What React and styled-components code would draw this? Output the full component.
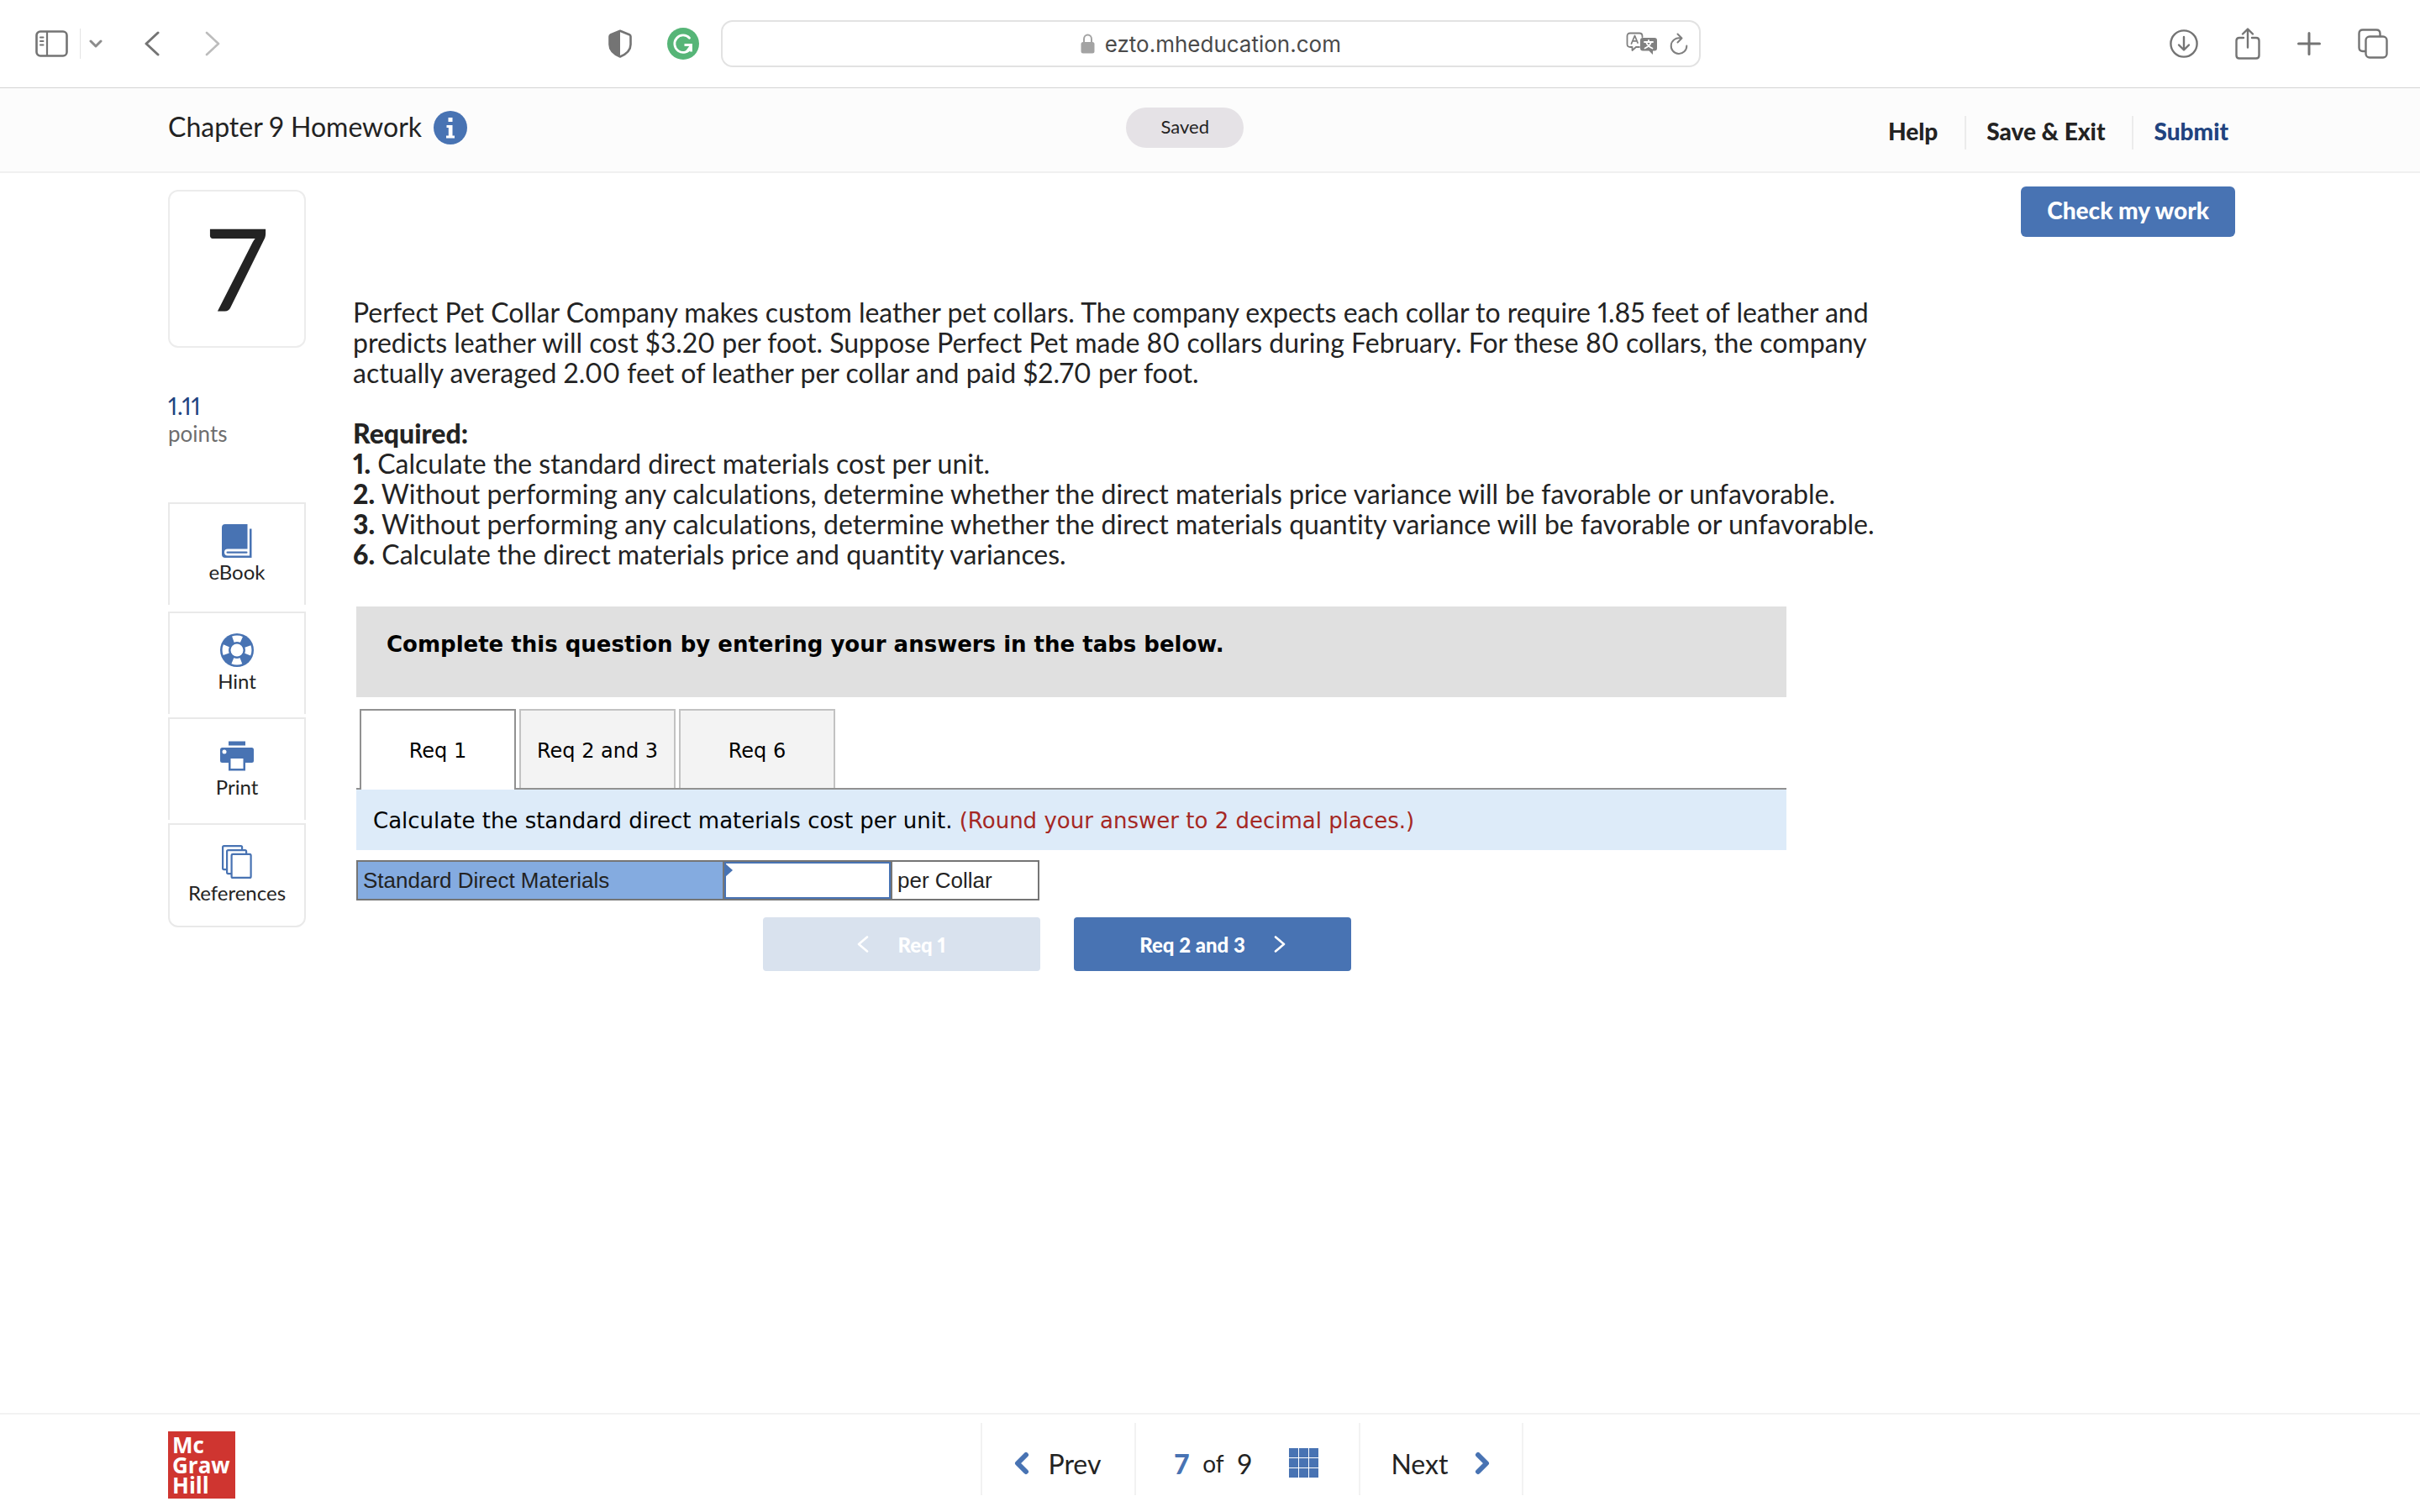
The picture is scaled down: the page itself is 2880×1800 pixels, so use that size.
import React, { useState } from "react";
import styled, { createGlobalStyle } from "styled-components";

const GlobalStyle = createGlobalStyle`
  * {
    box-sizing: border-box;
  }
  body {
    margin: 0;
    background: #fff;
    color: #232323;
    font-family: Lato, "Open Sans", sans-serif;
    font-variant-ligatures: none;
    font-variant-numeric: proportional-nums;
  }
  button, input {
    font: inherit;
    font-variant-numeric: inherit;
    color: inherit;
    margin: 0;
    padding: 0;
    border: none;
    background: none;
  }
  button {
    cursor: pointer;
  }
  a {
    color: inherit;
    text-decoration: none;
  }
  svg {
    display: block;
    flex: none;
  }
`;

const Page = styled.div`
  display: flex;
  flex-direction: column;
  min-height: 100vh;
`;

/* browser toolbar */

const Toolbar = styled.div`
  display: grid;
  grid-template-columns: 5fr auto 6fr;
  align-items: center;
  height: 105px;
  padding: 0 38px 0 42px;
  border-bottom: 1px solid #d4d4d4;
  color: #747474;
`;

const ToolGroup = styled.div`
  display: flex;
  align-items: center;
  gap: ${({ $gap }) => $gap}px;
  justify-content: ${({ $end }) => ($end ? "flex-end" : "flex-start")};
`;

const ToolDivider = styled.span`
  width: 1px;
  height: 36px;
  margin-right: -4px;
  background: #e4e4e4;
`;

const HistoryButtons = styled(ToolGroup)`
  margin-left: 36px;
`;

const AddressBar = styled.div`
  display: flex;
  align-items: center;
  width: 1166px;
  height: 56px;
  margin-left: 12px;
  padding: 0 13px;
  border: 2px solid #e2e2e2;
  border-radius: 14px;
`;

const AddressSide = styled.div`
  display: flex;
  flex: 1;
  justify-content: flex-end;
  gap: 14px;
`;

const Address = styled.label`
  display: flex;
  align-items: center;
  gap: 12px;
  color: #4a4a4a;
`;

const AddressInput = styled.input`
  field-sizing: content;
  padding-top: 2px;
  font-family: Inter, sans-serif;
  font-size: 26px;
  line-height: 32px;
  outline: none;
`;

/* assignment header */

const Header = styled.header`
  display: grid;
  grid-template-columns: 29fr auto 30fr;
  height: 101px;
  padding: 0 220px 0 200px;
  background: #fcfcfc;
  border-bottom: 2px solid #f0f0f0;
`;

const Title = styled.h1`
  display: flex;
  align-items: center;
  gap: 14px;
  height: 94px;
  margin: 0;
  font-size: 32px;
  font-weight: 400;
`;

const TitleText = styled.span`
  padding-bottom: 4px;
`;

const SavedPill = styled.span`
  align-self: start;
  width: 140px;
  margin-top: 23px;
  padding-bottom: 2px;
  border-radius: 24px;
  background: #e5e2e6;
  font-size: 22px;
  line-height: 46px;
  text-align: center;
`;

const HeaderLinks = styled.nav`
  display: flex;
  align-items: center;
  justify-content: flex-end;
  height: 106px;
  padding-right: 8px;
`;

const HeaderLink = styled.a`
  padding: 0 0 4px 24px;
  margin-left: 32px;
  border-left: 2px solid ${({ $first }) => ($first ? "transparent" : "#ececec")};
  color: ${({ $primary }) => ($primary ? "#21437f" : "inherit")};
  font-size: 28px;
  font-weight: 900;
  line-height: 36px;
`;

/* main area */

const Main = styled.main`
  display: flex;
  flex: 1;
  gap: 56px;
  padding: 0 220px 0 200px;
`;

const Sidebar = styled.aside`
  flex: none;
  width: 164px;
  padding-top: 20px;
`;

const QuestionNumber = styled.div`
  height: 188px;
  border: 2px solid #ececec;
  border-radius: 12px;
  font-size: 136px;
  line-height: 180px;
  text-align: center;
`;

const Points = styled.div`
  margin: 52px 0 66px;
  color: #6e6e6e;
  font-size: 26px;
  line-height: 32px;
`;

const PointsValue = styled.div`
  color: #21437f;
  font-size: 28px;
  line-height: 34px;
`;

const ToolButton = styled.button`
  display: flex;
  flex-direction: column;
  align-items: center;
  gap: 4px;
  width: 100%;
  margin-bottom: ${({ $first }) => ($first ? 8 : 4)}px;
  padding: 24px 0 26px;
  border: 2px solid #e9e9e9;
  border-bottom-width: 0;
  font-size: 24px;
  line-height: 26px;

  &:last-child {
    border-bottom-width: 2px;
    border-radius: 0 0 12px 12px;
  }
`;

const ToolIcon = styled.span`
  display: flex;
  align-items: center;
  height: 40px;
`;

const Content = styled.section`
  flex: 1;
  padding-top: 16px;
`;

const CheckRow = styled.div`
  display: flex;
  justify-content: flex-end;
  margin-bottom: 72px;
`;

const CheckButton = styled.button`
  padding: 0 31px 4px;
  border-radius: 6px;
  background: #4873b3;
  color: #fff;
  font-size: 28px;
  font-weight: 900;
  line-height: 56px;
`;

const Question = styled.div`
  max-width: 1840px;
  margin-bottom: 44px;
  font-size: 32px;
  line-height: 36px;

  p {
    margin: 0 0 36px;
  }
  p:last-child {
    margin: 0;
  }
  b {
    font-weight: 900;
  }
`;

const AnswerArea = styled.div`
  max-width: 1706px;
  padding-left: 4px;
  color: #000;
  font-family: Verdana, "DejaVu Sans", sans-serif;
`;

const Banner = styled.div`
  margin-bottom: 14px;
  padding: 27px 36px 45px;
  background: #e0e0e0;
  font-size: 26px;
  font-weight: 700;
  line-height: 36px;
`;

const TabList = styled.div`
  display: flex;
  gap: 4px;
  height: 96px;
  padding-left: 4px;
  border-bottom: 2px solid #919191;
`;

const Tab = styled.button`
  width: 186px;
  height: ${({ $active }) => ($active ? 96 : 94)}px;
  padding-top: ${({ $active }) => ($active ? 2 : 4)}px;
  border: 2px solid ${({ $active }) => ($active ? "#919191" : "#c2c2c2")};
  border-bottom: none;
  background: ${({ $active }) => ($active ? "#fff" : "#f3f3f3")};
  font-size: 24px;
`;

const Instruction = styled.div`
  padding: 19px 20px 17px;
  background: #ddebf9;
  font-size: 26px;
  line-height: 36px;
`;

const RoundingNote = styled.span`
  color: #a52824;
`;

const AnswerTable = styled.table`
  width: 811px;
  height: 48px;
  margin-top: 12px;
  border-collapse: collapse;
  table-layout: fixed;
  color: #232323;
  font-family: "Liberation Sans", Arial, sans-serif;
  font-size: 26px;
  line-height: 30px;
`;

const Cell = styled.td`
  position: relative;
  width: ${({ $width }) => $width}px;
  height: 46px;
  padding: ${({ $flush }) => ($flush ? "0" : "0 6px")};
  border: 2px solid #757575;
  background: ${({ $filled }) => ($filled ? "#84abe0" : "#fff")};
`;

const AnswerInput = styled.input`
  display: block;
  width: 100%;
  height: 44px;
  padding: 0 12px;
  border: 2px solid #4873b3;
  outline: none;
`;

const CellMarker = styled.svg`
  position: absolute;
  top: 2px;
  left: 1px;
`;

const StepRow = styled.div`
  display: flex;
  justify-content: center;
  gap: 40px;
  margin-top: 20px;
  padding-right: 34px;
  font-family: Lato, sans-serif;
`;

const StepButton = styled.button`
  display: flex;
  align-items: center;
  justify-content: center;
  gap: 34px;
  width: 330px;
  height: 64px;
  border-radius: 4px;
  background: ${({ disabled }) => (disabled ? "#d9e2ee" : "#4873b3")};
  color: #fff;
  font-size: 24px;
  font-weight: 900;
`;

/* footer */

const Footer = styled.footer`
  display: grid;
  grid-template-columns: 8fr auto 7fr;
  height: 118px;
  padding: 10px 220px 0 200px;
  border-top: 2px solid #f2f2f2;
`;

const Logo = styled.div`
  width: 80px;
  height: 80px;
  margin-top: 10px;
  padding: 4px 5px;
  background: #cf3530;
  color: #fff;
  font-family: "Open Sans", sans-serif;
  font-size: 26px;
  font-weight: 700;
  line-height: 24px;
`;

const Pager = styled.nav`
  display: flex;
  height: 86px;
  border-right: 2px solid #f2f2f2;
  font-size: 32px;
`;

const PagerItem = styled.div`
  display: flex;
  align-items: center;
  justify-content: center;
  gap: ${({ $gap }) => $gap}px;
  width: ${({ $width }) => $width}px;
  padding: 10px 2px 0 0;
  border-left: 2px solid #f2f2f2;
`;

const PagerButton = styled(PagerItem).attrs({ as: "button" })`
  border-top: none;
`;

const Current = styled.span`
  color: #4873b3;
  font-weight: 900;
`;

const Of = styled.span`
  font-size: 28px;
`;

const IconButton = styled.button`
  margin-left: ${({ $push }) => $push || 0}px;
`;

/* icons */

const Line = ({ w, h, d, width = 2, color = "currentColor", children }) => (
  <svg
    width={w}
    height={h}
    viewBox={`0 0 ${w} ${h}`}
    fill="none"
    stroke={color}
    strokeWidth={width}
    strokeLinecap="round"
    strokeLinejoin="round"
  >
    {d && <path d={d} />}
    {children}
  </svg>
);

const SidebarIcon = () => (
  <Line w={39} h={32} width={2.6}>
    <rect x="1.5" y="1.5" width="36" height="29" rx="4.5" />
    <path d="M14 2V30" strokeWidth="2.2" />
    <path d="M6 8.5H9.5M6 13H9.5M6 17.5H9.5" strokeWidth="2" />
  </Line>
);

const ShieldIcon = () => (
  <Line w={28} h={34} width={2.6}>
    <path d="M14 1.8L25 6.2Q26.5 7 26.5 8.5V18C26.5 25 20 30 14 32.5C8 30 1.5 25 1.5 18V8.5Q1.5 7 3 6.2Z" />
    <path d="M14 1.8V32.5C8 30 1.5 25 1.5 18V8.5Q1.5 7 3 6.2Z" fill="currentColor" stroke="none" />
  </Line>
);

const GrammarlyIcon = () => (
  <svg width="38" height="38" viewBox="0 0 38 38" fill="none">
    <circle cx="19" cy="19" r="19" fill="#56b577" />
    <path
      d="M26.5 12.2A10.2 10.2 0 1 0 28 24"
      stroke="#fff"
      strokeWidth="2.8"
      strokeLinecap="round"
    />
    <path d="M20.5 20.5H28.5V28.5" stroke="#fff" strokeWidth="2.8" />
    <path d="M28.5 20.5L23 28" stroke="#fff" strokeWidth="2" />
  </svg>
);

const LockIcon = () => (
  <svg width="17" height="24" viewBox="0 0 17 24" fill="none">
    <path d="M4 11V6.5A4.5 5 0 0 1 13 6.5V11" stroke="#a3a3a3" strokeWidth="2" />
    <rect x="0.5" y="10" width="16" height="13.5" rx="2.5" fill="#a3a3a3" />
  </svg>
);

const TranslateIcon = () => (
  <Line w={38} h={28} width={1.8} color="#808080">
    <path d="M16 18H12L7.5 22V18H5Q1.5 18 1.5 14.5V5Q1.5 1.5 5 1.5H16Q19.5 1.5 19.5 5V6" />
    <path d="M6.5 14L10.5 4.5L14 13M8 10.8H13" />
    <path
      d="M20 7H34Q37 7 37 10V19.5Q37 22.5 34 22.5H32V27L27.5 22.5H20Q17 22.5 17 19.5V10Q17 7 20 7Z"
      fill="#808080"
      stroke="none"
    />
    <path d="M22 12H32M27 9.8V12M30 12Q28.5 17 22.5 19.5M24 12Q26 17.5 31.5 19.5" stroke="#fff" />
  </Line>
);

const ReloadIcon = () => (
  <Line w={22} h={27} width={2} color="#808080" d="M12.5 6.5A9.3 9.3 0 1 0 20.3 15.5M9.5 1.5L14.5 6.5L9.5 11.5" />
);

const DownloadIcon = () => (
  <Line w={34} h={34} width={2.4}>
    <circle cx="17" cy="17" r="15.6" />
    <path d="M17 9V24M11 18.5L17 24.5L23 18.5" />
  </Line>
);

const ShareIcon = () => (
  <Line w={30} h={38} width={2.4} d="M10 12H5Q1.5 12 1.5 15.5V33Q1.5 36.5 5 36.5H25Q28.5 36.5 28.5 33V15.5Q28.5 12 25 12H20M15 23.5V2M9 7.5L15 1.5L21 7.5" />
);

const TabsIcon = () => (
  <Line w={36} h={36} width={2.4}>
    <path d="M9 27H6Q1.5 27 1.5 22.5V6Q1.5 1.5 6 1.5H22Q26.5 1.5 26.5 6V9" />
    <rect x="9.5" y="9.5" width="25" height="25" rx="4.5" />
  </Line>
);

const InfoIcon = () => (
  <svg width="40" height="40" viewBox="0 0 40 40">
    <circle cx="20" cy="20" r="20" fill="#4873b3" />
    <path d="M17.5 8H22.5V13H17.5ZM15.5 17H22.5V29.5H25V32.5H15V29.5H17.8V20H15.5Z" fill="#fff" />
  </svg>
);

const BookIcon = () => (
  <svg width="36" height="40" viewBox="0 0 36 40" fill="#4873b3">
    <path d="M4 0H30.5V29.5H7A4 4 0 0 0 7 37.5H33V5.5H35.5V40H4A4 4 0 0 1 0 36V4A4 4 0 0 1 4 0Z" />
    <rect x="5.5" y="32.5" width="25" height="2.2" rx="1" />
  </svg>
);

const HintIcon = () => (
  <svg width="40" height="40" viewBox="0 0 40 40">
    <circle cx="20" cy="20" r="20" fill="#4873b3" />
    <circle
      cx="20"
      cy="20"
      r="13.7"
      fill="none"
      stroke="#fff"
      strokeWidth="7.5"
      strokeDasharray="10.3 11.22"
      strokeDashoffset="5.15"
    />
    <circle cx="20" cy="20" r="7.5" fill="#fff" />
  </svg>
);

const PrintIcon = () => (
  <svg width="40" height="36" viewBox="0 0 40 36">
    <path d="M10 0.5H30V5.5H10Z" fill="#4873b3" />
    <rect y="8" width="40" height="18" rx="2.5" fill="#4873b3" />
    <circle cx="5" cy="13" r="2.5" fill="#fff" />
    <path d="M11.2 19.5H28.8V34.3H11.2Z" fill="#4873b3" stroke="#4873b3" strokeWidth="2.4" />
    <path d="M12.5 21H27.5V33H12.5Z" fill="#fff" />
  </svg>
);

const ReferencesIcon = () => (
  <svg width="36" height="40" viewBox="0 0 36 40" fill="#fff" stroke="#4873b3" strokeWidth="2.2">
    <rect x="1.1" y="1.1" width="23" height="28" rx="1.5" />
    <rect x="6.1" y="6.1" width="23" height="28" rx="1.5" />
    <rect x="11.6" y="10.9" width="23" height="28" rx="1.5" />
  </svg>
);

const GridIcon = () => (
  <svg width="36" height="36" viewBox="0 0 36 36" fill="#4873b3">
    {[0, 12, 24].map((y) => [0, 12, 24].map((x) => <rect key={`${x}-${y}`} x={x} y={y} width="11" height="11" />))}
  </svg>
);

const tools = [
  { label: "eBook", Icon: BookIcon },
  { label: "Hint", Icon: HintIcon },
  { label: "Print", Icon: PrintIcon },
  { label: "References", Icon: ReferencesIcon },
];

const tabs = ["Req 1", "Req 2 and 3", "Req 6"];

function BrowserToolbar() {
  const [address, setAddress] = useState("ezto.mheducation.com");
  return (
    <Toolbar>
      <ToolGroup $gap={14}>
        <button aria-label="Show sidebar"><SidebarIcon /></button>
        <ToolDivider />
        <button aria-label="Tab groups"><Line w={16} h={12} width={3} color="#8c8c8c" d="M2 3L8 9L14 3" /></button>
        <HistoryButtons $gap={54}>
          <button aria-label="Back"><Line w={18} h={30} width={3} d="M16 2L2 15L16 28" /></button>
          <button aria-label="Forward"><Line w={18} h={30} width={2.6} color="#bcbcbc" d="M2 2L16 15L2 28" /></button>
        </HistoryButtons>
      </ToolGroup>
      <ToolGroup $gap={42}>
        <button aria-label="Privacy report"><ShieldIcon /></button>
        <ToolGroup $gap={14}>
          <button aria-label="Grammarly"><GrammarlyIcon /></button>
          <AddressBar>
            <AddressSide />
            <Address>
              <LockIcon />
              <AddressInput
                type="text"
                aria-label="Address"
                value={address}
                onChange={(e) => setAddress(e.target.value)}
              />
            </Address>
            <AddressSide>
              <button aria-label="Translate"><TranslateIcon /></button>
              <button aria-label="Reload"><ReloadIcon /></button>
            </AddressSide>
          </AddressBar>
        </ToolGroup>
      </ToolGroup>
      <ToolGroup $gap={44} $end>
        <button aria-label="Downloads"><DownloadIcon /></button>
        <button aria-label="Share"><ShareIcon /></button>
        <button aria-label="New tab"><Line w={28} h={28} width={3} d="M14 1.5V26.5M1.5 14H26.5" /></button>
        <button aria-label="Show tabs"><TabsIcon /></button>
      </ToolGroup>
    </Toolbar>
  );
}

function AnswerPanel() {
  const [active, setActive] = useState(0);
  const [answer, setAnswer] = useState("");
  return (
    <AnswerArea>
      <Banner>Complete this question by entering your answers in the tabs below.</Banner>
      <TabList role="tablist">
        {tabs.map((tab, i) => (
          <Tab key={tab} role="tab" aria-selected={i === active} $active={i === active} onClick={() => setActive(i)}>
            {tab}
          </Tab>
        ))}
      </TabList>
      <Instruction>
        Calculate the standard direct materials cost per unit.{" "}
        <RoundingNote>(Round your answer to 2 decimal places.)</RoundingNote>
      </Instruction>
      <AnswerTable>
        <tbody>
          <tr>
            <Cell $width={436} $filled>
              <label htmlFor="standard-cost">Standard Direct Materials</label>
            </Cell>
            <Cell $width={200} $flush>
              <AnswerInput
                id="standard-cost"
                type="text"
                value={answer}
                onChange={(e) => setAnswer(e.target.value)}
              />
              <CellMarker width="10" height="16" viewBox="0 0 10 16" fill="#4873b3">
                <path d="M0 0L9 8L0 16Z" />
              </CellMarker>
            </Cell>
            <Cell $width={175}>per Collar</Cell>
          </tr>
        </tbody>
      </AnswerTable>
      <StepRow>
        <StepButton disabled>
          <Line w={14} h={20} width={2.6} d="M12 1.5L2 10L12 18.5" />
          Req 1
        </StepButton>
        <StepButton onClick={() => setActive(1)}>
          Req 2 and 3
          <Line w={14} h={20} width={2.6} d="M2 1.5L12 10L2 18.5" />
        </StepButton>
      </StepRow>
    </AnswerArea>
  );
}

export default function App() {
  return (
    <Page>
      <GlobalStyle />
      <BrowserToolbar />
      <Header>
        <Title>
          <TitleText>Chapter 9 Homework</TitleText>
          <button aria-label="Assignment information"><InfoIcon /></button>
        </Title>
        <SavedPill>Saved</SavedPill>
        <HeaderLinks>
          <HeaderLink href="#help" $first>Help</HeaderLink>
          <HeaderLink href="#exit">Save &amp; Exit</HeaderLink>
          <HeaderLink href="#submit" $primary>Submit</HeaderLink>
        </HeaderLinks>
      </Header>
      <Main>
        <Sidebar>
          <QuestionNumber>7</QuestionNumber>
          <Points>
            <PointsValue>1.11</PointsValue>
            points
          </Points>
          {tools.map(({ label, Icon }, i) => (
            <ToolButton key={label} $first={i === 0}>
              <ToolIcon><Icon /></ToolIcon>
              {label}
            </ToolButton>
          ))}
        </Sidebar>
        <Content>
          <CheckRow>
            <CheckButton>Check my work</CheckButton>
          </CheckRow>
          <Question>
            <p>
              Perfect Pet Collar Company makes custom leather pet collars. The company expects each collar to require
              1.85 feet of leather and predicts leather will cost $3.20 per foot. Suppose Perfect Pet made 80 collars
              during February. For these 80 collars, the company actually averaged 2.00 feet of leather per collar and
              paid $2.70 per foot.
            </p>
            <p>
              <b>Required:</b>
              <br />
              <b>1.</b> Calculate the standard direct materials cost per unit.
              <br />
              <b>2.</b> Without performing any calculations, determine whether the direct materials price variance will
              be favorable or unfavorable.
              <br />
              <b>3.</b> Without performing any calculations, determine whether the direct materials quantity variance
              will be favorable or unfavorable.
              <br />
              <b>6.</b> Calculate the direct materials price and quantity variances.
            </p>
          </Question>
          <AnswerPanel />
        </Content>
      </Main>
      <Footer>
        <Logo>
          Mc
          <br />
          Graw
          <br />
          Hill
        </Logo>
        <Pager>
          <PagerButton $width={183} $gap={22}>
            <Line w={18} h={28} width={6} color="#4873b3" d="M14 4L4 14L14 24" />
            Prev
          </PagerButton>
          <PagerItem $width={267} $gap={16}>
            <Current>7</Current>
            <Of>of</Of>
            <span>9</span>
            <IconButton aria-label="All questions" $push={28}><GridIcon /></IconButton>
          </PagerItem>
          <PagerButton $width={194} $gap={32}>
            Next
            <Line w={18} h={28} width={6} color="#4873b3" d="M4 4L14 14L4 24" />
          </PagerButton>
        </Pager>
      </Footer>
    </Page>
  );
}
